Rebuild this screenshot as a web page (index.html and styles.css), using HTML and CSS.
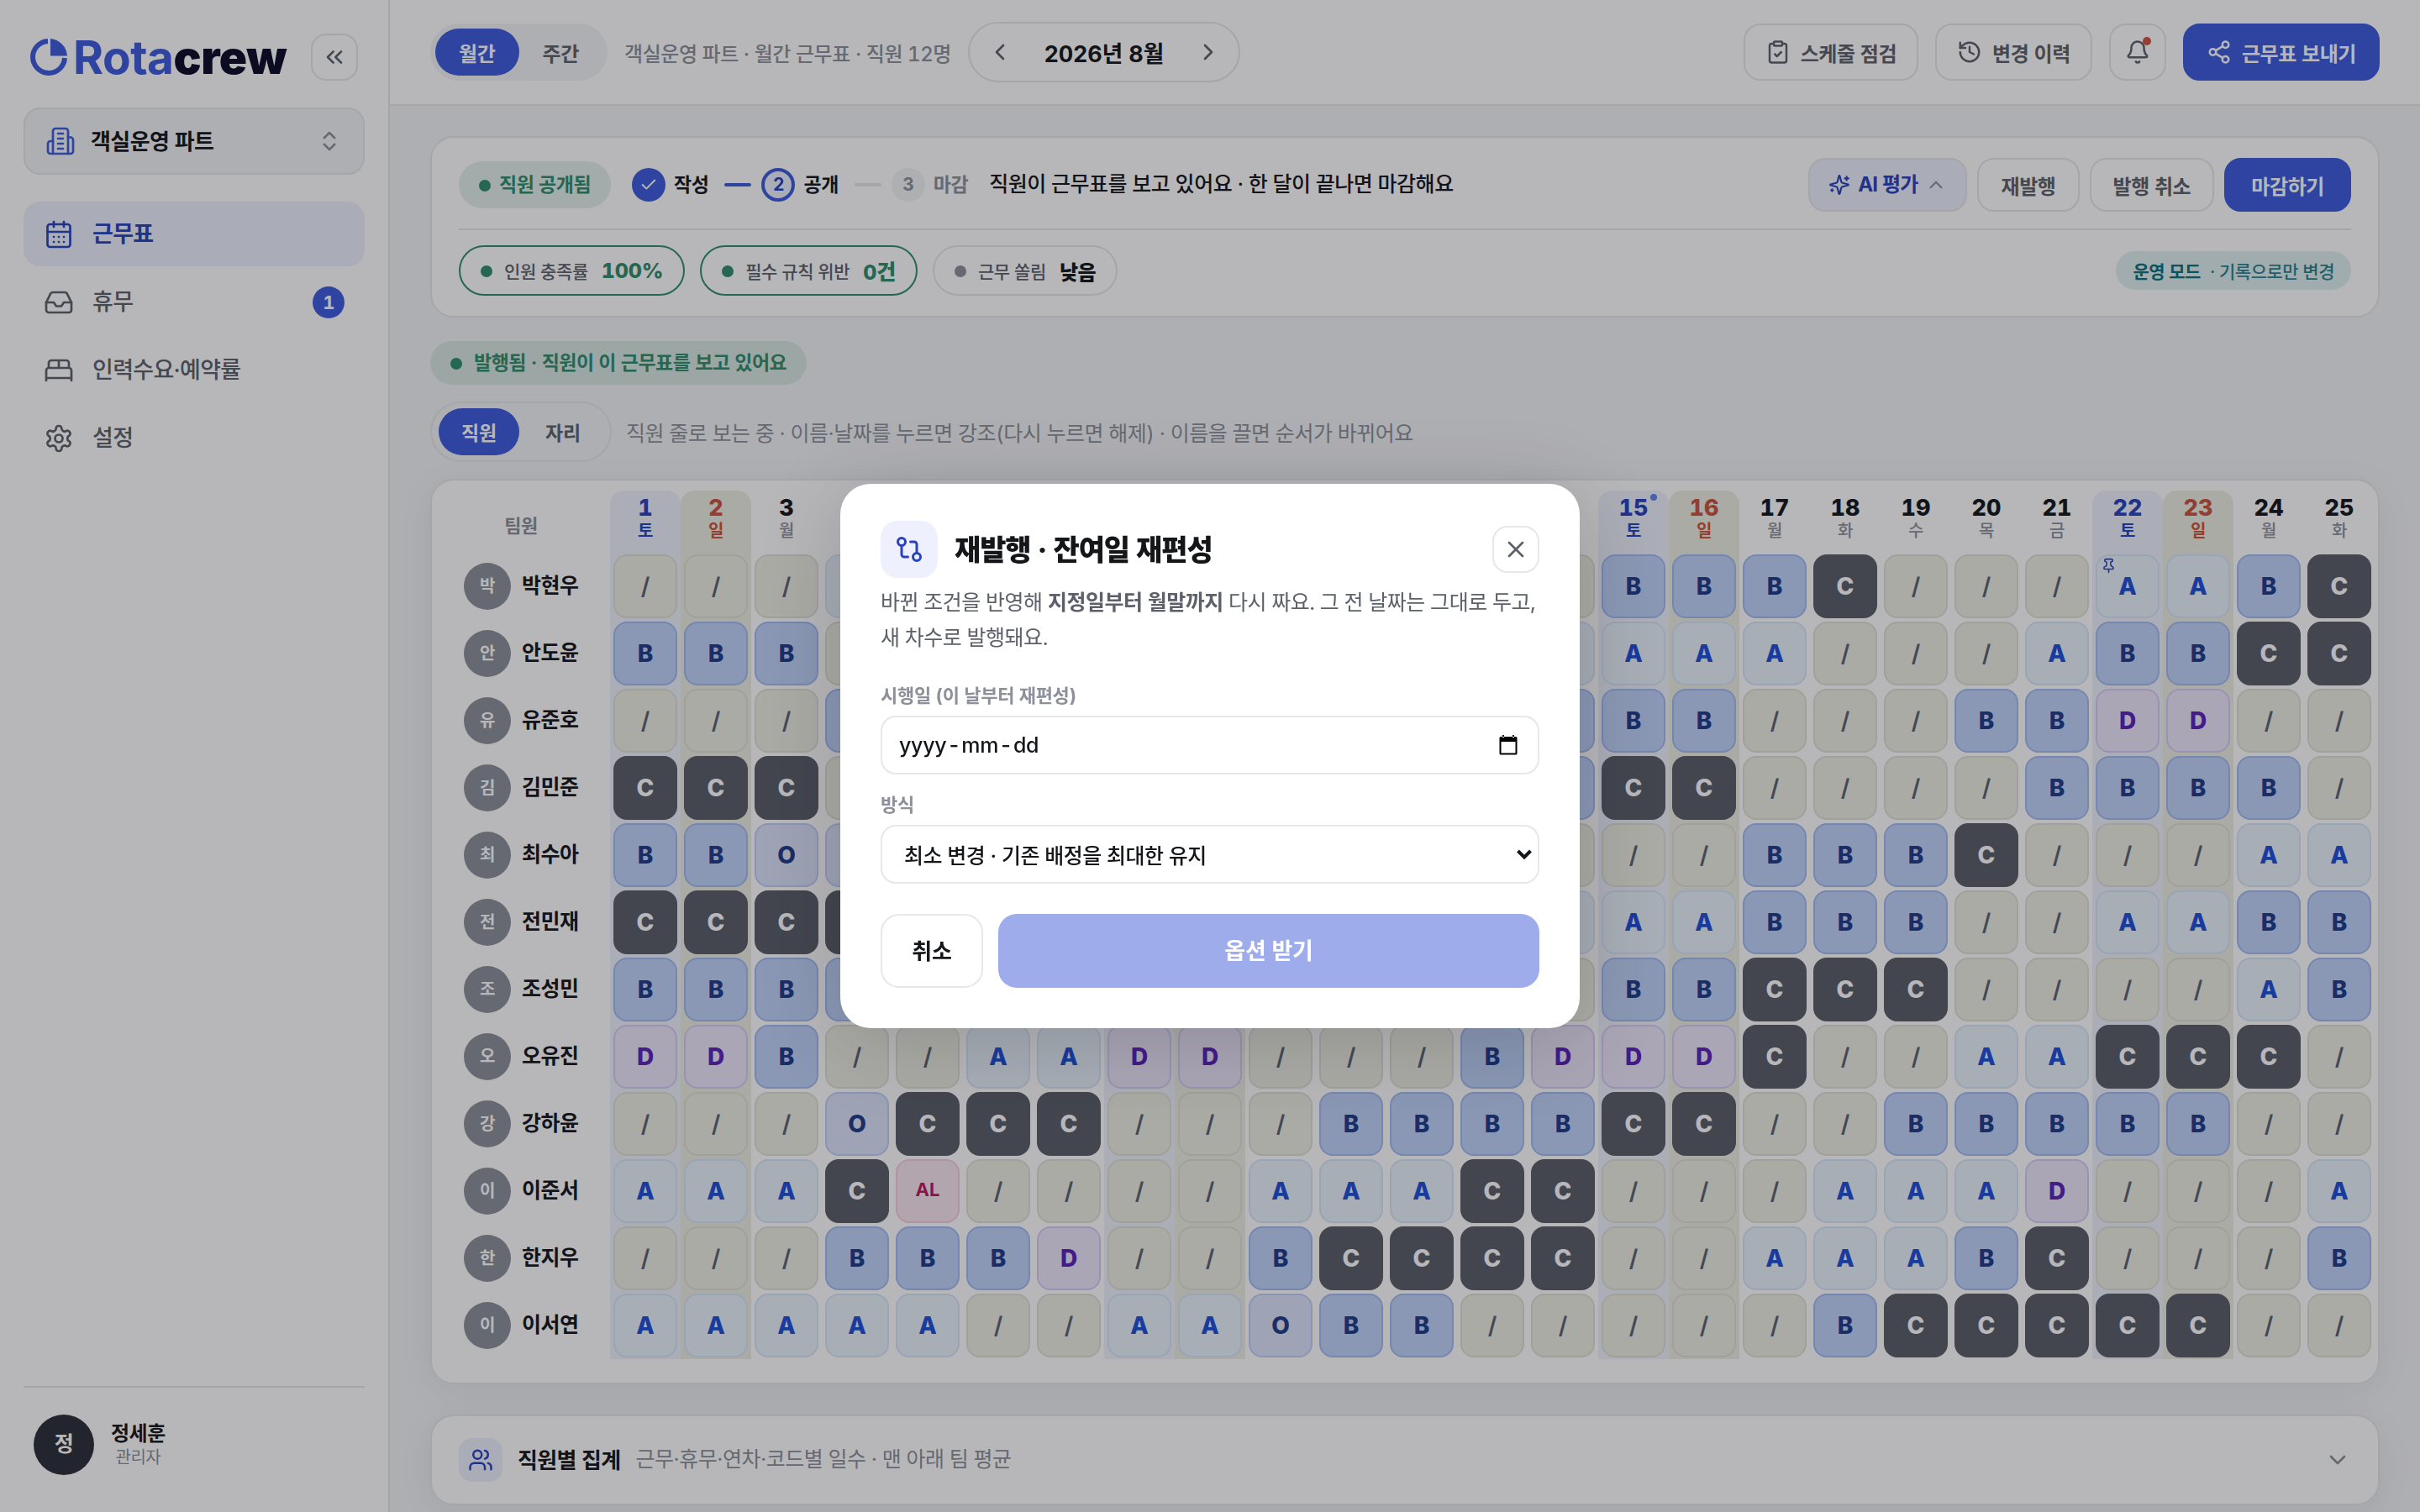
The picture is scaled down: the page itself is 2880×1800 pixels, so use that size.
FILE: index.html
```html
<!DOCTYPE html>
<html lang="ko">
<head>
  <meta charset="UTF-8">
  <meta name="viewport" content="width=device-width, initial-scale=1.0">
  <title>Rotacrew · 근무표</title>
  <link rel="stylesheet" href="styles.css">
</head>
<body>
  <div class="app">
    <!-- 사이드바 -->
    <aside class="sidebar">
      <div class="brand-row">
        <div class="brand">
          <svg class="brand-mark" viewBox="0 0 44 44"><path d="M21 3A19 19 0 1 0 41 23" fill="none" stroke="currentColor" stroke-width="6"/><path d="M24 .1A22 22 0 0 1 44 20.5H24Z" fill="currentColor"/></svg>
          <span class="brand-name">Rota<b>crew</b></span>
        </div>
        <button class="icon-btn collapse"><svg class="icon i32" viewBox="0 0 24 24"><path d="m11 17-5-5 5-5M18 17l-5-5 5-5"/></svg></button>
      </div>
      <button class="part-select">
        <svg class="icon i36 blue" viewBox="0 0 24 24"><path d="M6 22V4a2 2 0 0 1 2-2h8a2 2 0 0 1 2 2v18Z"/><path d="M6 12H4a2 2 0 0 0-2 2v6a2 2 0 0 0 2 2h2M18 9h2a2 2 0 0 1 2 2v9a2 2 0 0 1-2 2h-2M10 6h4M10 10h4M10 14h4M10 18h4"/></svg>
        <span>객실운영 파트</span>
        <svg class="icon i30 push muted" viewBox="0 0 24 24"><path d="m7 15 5 5 5-5M7 9l5-5 5 5"/></svg>
      </button>
      <nav class="nav">
        <a class="nav-item active">
          <svg class="icon i36" viewBox="0 0 24 24"><path d="M8 2v4M16 2v4M3 10h18"/><rect x="3" y="4" width="18" height="18" rx="2"/><path d="M8 14h.01M12 14h.01M16 14h.01M8 18h.01M12 18h.01M16 18h.01"/></svg>
          <span>근무표</span>
        </a>
        <a class="nav-item">
          <svg class="icon i36" viewBox="0 0 24 24"><path d="M22 12h-6l-2 3h-4l-2-3H2"/><path d="M5.45 5.11 2 12v6a2 2 0 0 0 2 2h16a2 2 0 0 0 2-2v-6l-3.45-6.89A2 2 0 0 0 16.76 4H7.24a2 2 0 0 0-1.79 1.11z"/></svg>
          <span>휴무</span>
          <em class="nav-badge">1</em>
        </a>
        <a class="nav-item">
          <svg class="icon i36" viewBox="0 0 24 24"><path d="M2 20v-8a2 2 0 0 1 2-2h16a2 2 0 0 1 2 2v8M4 10V6a2 2 0 0 1 2-2h12a2 2 0 0 1 2 2v4M12 4v6M2 18h20"/></svg>
          <span>인력수요·예약률</span>
        </a>
        <a class="nav-item">
          <svg class="icon i36" viewBox="0 0 24 24"><path d="M12.22 2h-.44a2 2 0 0 0-2 2v.18a2 2 0 0 1-1 1.73l-.43.25a2 2 0 0 1-2 0l-.15-.08a2 2 0 0 0-2.73.73l-.22.38a2 2 0 0 0 .73 2.73l.15.1a2 2 0 0 1 1 1.72v.51a2 2 0 0 1-1 1.74l-.15.09a2 2 0 0 0-.73 2.73l.22.38a2 2 0 0 0 2.73.73l.15-.08a2 2 0 0 1 2 0l.43.25a2 2 0 0 1 1 1.73V20a2 2 0 0 0 2 2h.44a2 2 0 0 0 2-2v-.18a2 2 0 0 1 1-1.73l.43-.25a2 2 0 0 1 2 0l.15.08a2 2 0 0 0 2.73-.73l.22-.39a2 2 0 0 0-.73-2.73l-.15-.08a2 2 0 0 1-1-1.74v-.5a2 2 0 0 1 1-1.74l.15-.09a2 2 0 0 0 .73-2.73l-.22-.38a2 2 0 0 0-2.73-.73l-.15.08a2 2 0 0 1-2 0l-.43-.25a2 2 0 0 1-1-1.73V4a2 2 0 0 0-2-2z"/><circle cx="12" cy="12" r="3"/></svg>
          <span>설정</span>
        </a>
      </nav>
      <div class="account">
        <span class="account-avatar">정</span>
        <span class="account-text"><strong>정세훈</strong><small>관리자</small></span>
      </div>
    </aside>

    <div class="main">
      <!-- 상단 바 -->
      <header class="topbar">
        <div class="segment">
          <button class="on">월간</button>
          <button>주간</button>
        </div>
        <span class="topbar-sub">객실운영 파트 · 월간 근무표 · 직원 12명</span>
        <div class="month-nav">
          <button><svg class="icon i32" viewBox="0 0 24 24"><path d="m15 18-6-6 6-6"/></svg></button>
          <strong>2026년 8월</strong>
          <button><svg class="icon i32" viewBox="0 0 24 24"><path d="m9 18 6-6-6-6"/></svg></button>
        </div>
        <div class="topbar-actions">
          <button class="btn tall">
            <svg class="icon i30" viewBox="0 0 24 24"><rect x="8" y="2" width="8" height="4" rx="1"/><path d="M16 4h2a2 2 0 0 1 2 2v14a2 2 0 0 1-2 2H6a2 2 0 0 1-2-2V6a2 2 0 0 1 2-2h2M9 14l2 2 4-4"/></svg>
            스케줄 점검
          </button>
          <button class="btn tall">
            <svg class="icon i30" viewBox="0 0 24 24"><path d="M3 12a9 9 0 1 0 9-9 9.75 9.75 0 0 0-6.74 2.74L3 8"/><path d="M3 3v5h5M12 7v5l4 2"/></svg>
            변경 이력
          </button>
          <button class="btn tall bell">
            <svg class="icon i30" viewBox="0 0 24 24"><path d="M10.27 21a2 2 0 0 0 3.46 0"/><path d="M3.26 15.33A1 1 0 0 0 4 17h16a1 1 0 0 0 .74-1.67C19.41 13.96 18 12.5 18 8A6 6 0 0 0 6 8c0 4.5-1.41 5.96-2.74 7.33"/></svg>
            <i class="bell-dot"></i>
          </button>
          <button class="btn tall primary">
            <svg class="icon i30" viewBox="0 0 24 24"><circle cx="18" cy="5" r="3"/><circle cx="6" cy="12" r="3"/><circle cx="18" cy="19" r="3"/><path d="m8.59 13.51 6.83 3.98M15.41 6.51l-6.82 3.98"/></svg>
            근무표 보내기
          </button>
        </div>
      </header>

      <div class="content">
        <!-- 발행 상태 -->
        <section class="card status-card">
          <div class="status-row">
            <span class="pub-chip"><i class="dot"></i>직원 공개됨</span>
            <div class="steps">
              <span class="step done"><i><svg class="icon" viewBox="0 0 24 24"><path d="M20 6 9 17l-5-5"/></svg></i>작성</span>
              <span class="bar on"></span>
              <span class="step now"><i>2</i>공개</span>
              <span class="bar"></span>
              <span class="step"><i>3</i>마감</span>
            </div>
            <span class="status-text">직원이 근무표를 보고 있어요 · 한 달이 끝나면 마감해요</span>
            <div class="status-actions">
              <button class="btn ai">
                <svg class="icon i26" viewBox="0 0 24 24"><path d="M9.94 15.5A2 2 0 0 0 8.5 14.06l-6.14-1.58a.5.5 0 0 1 0-.96L8.5 9.94A2 2 0 0 0 9.94 8.5l1.58-6.14a.5.5 0 0 1 .96 0l1.58 6.14a2 2 0 0 0 1.44 1.44l6.14 1.58a.5.5 0 0 1 0 .96l-6.14 1.58a2 2 0 0 0-1.44 1.44l-1.58 6.14a.5.5 0 0 1-.96 0z"/><path d="M20 3v4M22 5h-4M4 17v2M5 18H3"/></svg>
                AI 평가
                <svg class="icon i26 muted" viewBox="0 0 24 24"><path d="m18 15-6-6-6 6"/></svg>
              </button>
              <button class="btn">재발행</button>
              <button class="btn">발행 취소</button>
              <button class="btn primary">마감하기</button>
            </div>
          </div>
          <div class="metric-row">
            <span class="metric ok"><i class="dot"></i>인원 충족률<b>100%</b></span>
            <span class="metric ok"><i class="dot"></i>필수 규칙 위반<b>0건</b></span>
            <span class="metric"><i class="dot"></i>근무 쏠림<b>낮음</b></span>
            <span class="mode-chip"><b>운영 모드</b><span>· 기록으로만 변경</span></span>
          </div>
        </section>

        <div class="banner"><i class="dot"></i>발행됨 · 직원이 이 근무표를 보고 있어요</div>

        <div class="view-row">
          <div class="view-toggle">
            <button class="on">직원</button>
            <button>자리</button>
          </div>
          <span class="view-hint">직원 줄로 보는 중 · 이름·날짜를 누르면 강조(다시 누르면 해제) · 이름을 끌면 순서가 바뀌어요</span>
        </div>

        <!-- 근무표: 행은 스크립트에서 생성 -->
        <section class="card roster-card">
          <table class="roster">
            <thead><tr id="roster-head"></tr></thead>
            <tbody id="roster-body"></tbody>
          </table>
        </section>

        <section class="card summary-card">
          <span class="summary-icon"><svg class="icon i30" viewBox="0 0 24 24"><path d="M16 21v-2a4 4 0 0 0-4-4H6a4 4 0 0 0-4 4v2"/><circle cx="9" cy="7" r="4"/><path d="M22 21v-2a4 4 0 0 0-3-3.87M16 3.13a4 4 0 0 1 0 7.75"/></svg></span>
          <strong>직원별 집계</strong>
          <span class="summary-sub">근무·휴무·연차·코드별 일수 · 맨 아래 팀 평균</span>
          <svg class="icon i32 push muted" viewBox="0 0 24 24"><path d="m6 9 6 6 6-6"/></svg>
        </section>
      </div>
    </div>
  </div>

  <!-- 재발행 모달 -->
  <div class="overlay">
    <div class="modal">
      <div class="modal-head">
        <span class="modal-icon"><svg class="icon i36" viewBox="0 0 24 24"><circle cx="18" cy="18" r="3"/><circle cx="6" cy="6" r="3"/><path d="M13 6h3a2 2 0 0 1 2 2v7M11 18H8a2 2 0 0 1-2-2V9"/></svg></span>
        <h2>재발행 · 잔여일 재편성</h2>
        <button class="icon-btn push"><svg class="icon i32" viewBox="0 0 24 24"><path d="M18 6 6 18M6 6l12 12"/></svg></button>
      </div>
      <p class="modal-desc">바뀐 조건을 반영해 <b>지정일부터 월말까지</b> 다시 짜요. 그 전 날짜는 그대로 두고, 새 차수로 발행돼요.</p>
      <label class="field-label">시행일 (이 날부터 재편성)</label>
      <div class="field date-field">
        <span>yyyy</span><span class="sep">-</span><span>mm</span><span class="sep">-</span><span>dd</span>
        <svg class="date-icon push" viewBox="0 0 22 24"><path d="M4 0h2v3H4zM16 0h2v3h-2zM2 2h18a1.500 1.500 0 0 1 1.500 1.500V22a1.500 1.500 0 0 1-1.500 1.500H2A1.500 1.500 0 0 1 .5 22V3.500A1.500 1.500 0 0 1 2 2zM2.500 8v13.500h17V8z" fill="currentColor" fill-rule="evenodd"/></svg>
      </div>
      <label class="field-label">방식</label>
      <div class="field select-field">
        <span>최소 변경 · 기존 배정을 최대한 유지</span>
        <svg class="select-arrow push" viewBox="0 0 20 14"><path d="m2.500 3 7.500 7.500L17.500 3" fill="none" stroke="currentColor" stroke-width="4"/></svg>
      </div>
      <div class="modal-actions">
        <button class="cancel">취소</button>
        <button class="submit" disabled>옵션 받기</button>
      </div>
    </div>
  </div>

  <script>
    const week = ['토', '일', '월', '화', '수', '목', '금'];
    const crew = [
      ['박현우', '/ / / A A B B / / A A C C / B B B C / / / A A B C'],
      ['안도윤', 'B B B / / C C C / / B B / A A A A / / / A B B C C'],
      ['유준호', '/ / / B B B / / A A A / / B B B / / / B B D D / /'],
      ['김민준', 'C C C / / / A A B B / / B B C C / / / / B B B B /'],
      ['최수아', 'B B O O / / B B C C C / / / / / B B B C / / / A A'],
      ['전민재', 'C C C C / / / B B B / / A A A A B B B / / A A B B'],
      ['조성민', 'B B B B / / C C C / / A A / B B C C C / / / / A B'],
      ['오유진', 'D D B / / A A D D / / / B D D D C / / A A C C C /'],
      ['강하윤', '/ / / O C C C / / / B B B B C C / / B B B B B / /'],
      ['이준서', 'A A A C AL / / / / A A A C C / / / A A A D / / / A'],
      ['한지우', '/ / / B B B D / / B C C C C / / A A A B C / / / B'],
      ['이서연', 'A A A A A / / A A O B B / / / / / B C C C C C / /']
    ];
    const pin = '<svg class="icon pin" viewBox="0 0 24 24"><path d="M12 17v5M9 10.76a2 2 0 0 1-1.110 1.790l-1.780.9A2 2 0 0 0 5 15.240V16a1 1 0 0 0 1 1h12a1 1 0 0 0 1-1v-.76a2 2 0 0 0-1.110-1.790l-1.780-.9A2 2 0 0 1 15 10.760V7a1 1 0 0 1 1-1 2 2 0 0 0 0-4H8a2 2 0 0 0 0 4 1 1 0 0 1 1 1z"/></svg>';

    // 1일이 토요일
    function dayClass(i) {
      return i % 7 === 0 ? 'sat' : i % 7 === 1 ? 'sun' : '';
    }

    let head = '<th class="who">팀원</th>';
    for (let i = 0; i < 25; i++) {
      head += `<th class="${dayClass(i)}"><b>${i + 1}</b><small>${week[i % 7]}</small>${i === 14 ? '<i class="holiday"></i>' : ''}</th>`;
    }
    document.getElementById('roster-head').innerHTML = head;

    document.getElementById('roster-body').innerHTML = crew.map(([name, codes], row) => {
      const cells = codes.split(' ').map((code, i) => {
        const cls = code === '/' ? 'off' : code.toLowerCase();
        return `<td class="${dayClass(i)}"><span class="cell ${cls}">${code}${row === 0 && i === 21 ? pin : ''}</span></td>`;
      }).join('');
      return `<tr><td class="who"><div><i>${name[0]}</i>${name}</div></td>${cells}</tr>`;
    }).join('');
  </script>
</body>
</html>
```
FILE: styles.css
```css
:root {
  --brand: #3b5bdb;
  --brand-deep: #2843bd;
  --soft: #edf0fd;
  --ink: #14161a;
  --ink2: #5c606a;
  --muted: #8b909a;
  --line: #e6e7ea;
  --page: #f3f4f6;
  --green: #2f8d6a;
}
* { box-sizing: border-box; }
body {
  margin: 0;
  font-family: Inter, "Noto Sans CJK KR", sans-serif;
  font-size: 26px;
  line-height: 1.5;
  letter-spacing: -0.48px;
  font-variant-numeric: tabular-nums;
  color: var(--ink);
  background: var(--page);
  height: 1800px;
  overflow: hidden;
}
button {
  font: inherit;
  line-height: normal;
  letter-spacing: -0.26px;
  color: inherit;
  background: none;
  border: none;
  padding: 0;
  white-space: nowrap;
}
i, em { font-style: normal; }
.icon {
  fill: none;
  stroke: currentColor;
  stroke-width: 2;
  stroke-linecap: round;
  stroke-linejoin: round;
  flex: none;
  display: block;
}
.i26 { width: 26px; height: 26px; }
.i30 { width: 30px; height: 30px; }
.i32 { width: 32px; height: 32px; }
.i36 { width: 36px; height: 36px; stroke-width: 1.8; }
.push { margin-left: auto; }
.blue { color: var(--brand); }
.muted { color: var(--muted); }
.dot {
  width: 14px;
  height: 14px;
  border-radius: 50%;
  background: currentColor;
  flex: none;
  position: relative;
  top: 1px;
}
.app { display: flex; height: 1800px; }

/* sidebar */
.sidebar {
  width: 464px;
  flex: none;
  background: #fff;
  border-right: 2px solid var(--line);
  padding: 40px 28px 44px;
  display: flex;
  flex-direction: column;
}
.brand-row {
  display: flex;
  align-items: center;
  justify-content: space-between;
  padding: 0 8px;
  height: 56px;
}
.brand { display: flex; align-items: center; gap: 7px; color: var(--brand); }
.brand-mark { width: 44px; height: 44px; }
.brand-name { font-size: 55px; line-height: 56px; font-weight: 700; letter-spacing: -0.5px; }
.brand-name b { color: #0a0a28; }
.icon-btn {
  width: 56px;
  height: 56px;
  border: 2px solid var(--line);
  border-radius: 18px;
  display: flex;
  align-items: center;
  justify-content: center;
  color: var(--ink2);
}
.part-select {
  margin-top: 32px;
  height: 80px;
  flex: none;
  border: 2px solid var(--line);
  border-radius: 20px;
  background: var(--page);
  padding: 0 25px 0 24px;
  display: flex;
  align-items: center;
  gap: 18px;
  font-weight: 700;
  line-height: 1.5;
  letter-spacing: -0.6px;
}
.nav { margin-top: 32px; display: flex; flex-direction: column; gap: 4px; }
.nav-item {
  height: 77px;
  padding: 0 24px;
  border-radius: 20px;
  display: flex;
  align-items: center;
  gap: 22px;
  font-size: 27px;
  font-weight: 500;
  letter-spacing: -0.7px;
  color: var(--ink2);
}
.nav-item > span { padding-top: 2px; }
.nav-item.active { background: var(--soft); color: var(--brand-deep); font-weight: 700; }
.nav-badge {
  margin-left: auto;
  width: 38px;
  height: 38px;
  border-radius: 50%;
  background: var(--brand);
  color: #fff;
  font-size: 22px;
  line-height: 38px;
  font-weight: 700;
  text-align: center;
}
.account {
  margin-top: auto;
  border-top: 2px solid var(--line);
  padding: 32px 12px 0;
  display: flex;
  align-items: center;
  gap: 20px;
}
.account-avatar {
  width: 72px;
  height: 72px;
  border-radius: 50%;
  background: #2a2f39;
  color: #fff;
  font-size: 25px;
  font-weight: 700;
  display: flex;
  align-items: center;
  justify-content: center;
}
.account-text { display: flex; flex-direction: column; align-items: center; }
.account-text strong { font-size: 24px; line-height: 30px; font-weight: 700; }
.account-text small { font-size: 20px; line-height: 26px; color: var(--muted); }

/* topbar */
.main { flex: 1; min-width: 0; }
.topbar {
  height: 126px;
  background: #fff;
  border-bottom: 2px solid var(--line);
  padding: 0 48px;
  display: flex;
  align-items: center;
  gap: 20px;
}
.segment {
  display: flex;
  padding: 6px;
  border-radius: 34px;
  background: var(--page);
  font-size: 24px;
  font-weight: 700;
  color: var(--ink2);
}
.segment button { width: 99.5px; height: 56px; border-radius: 28px; }
.segment .on, .view-toggle .on { background: var(--brand); color: #fff; }
.topbar-sub { font-size: 24px; line-height: normal; font-weight: 500; letter-spacing: -0.44px; color: var(--muted); white-space: nowrap; }
.month-nav {
  height: 72px;
  width: 324px;
  border: 2px solid var(--line);
  border-radius: 36px;
  padding: 0 8px;
  display: flex;
  align-items: center;
  justify-content: space-between;
  font-size: 27px;
  line-height: normal;
  letter-spacing: -0.2px;
}
.month-nav button { width: 56px; height: 56px; display: flex; align-items: center; justify-content: center; color: var(--ink2); }
.topbar-actions { margin-left: auto; display: flex; gap: 20px; }
.btn {
  height: 64px;
  padding: 0 26px;
  border: 2px solid var(--line);
  border-radius: 20px;
  font-size: 24px;
  font-weight: 700;
  color: var(--ink2);
  display: flex;
  align-items: center;
  justify-content: center;
  gap: 12px;
}
.btn.tall { height: 68px; padding: 0 24px; letter-spacing: -0.4px; }
.btn.primary { background: var(--brand); border-color: var(--brand); color: #fff; padding: 0 30px; }
.btn.tall.primary { padding: 0 26px; }
.btn.bell { width: 68px; padding: 0; position: relative; }
.bell-dot {
  position: absolute;
  top: 14px;
  right: 16px;
  width: 10px;
  height: 10px;
  border-radius: 50%;
  background: #d0533f;
}

/* content */
.content { padding: 36px 48px 0; }
.card { background: #fff; border: 2px solid var(--line); border-radius: 28px; }
.status-card { padding: 24px 32px; }
.status-row { display: flex; align-items: center; height: 64px; }
.pub-chip {
  height: 56px;
  padding: 0 24px;
  border-radius: 28px;
  background: #e2efea;
  color: var(--green);
  font-size: 23px;
  font-weight: 700;
  display: flex;
  align-items: center;
  gap: 10px;
}
.steps { display: flex; align-items: center; margin-left: 25px; font-size: 23px; font-weight: 700; }
.step { display: flex; align-items: center; gap: 10px; color: var(--muted); }
.step i {
  width: 40px;
  height: 40px;
  border-radius: 50%;
  background: var(--page);
  display: flex;
  align-items: center;
  justify-content: center;
  font-size: 21px;
}
.step .icon { width: 22px; height: 22px; }
.step.done, .step.now { color: var(--ink); }
.step.done i { background: var(--brand); color: #fff; }
.step.now i { background: var(--soft); border: 4px solid var(--brand); color: var(--brand-deep); }
.bar { width: 32px; height: 4px; border-radius: 2px; background: var(--line); margin: 0 12px 0 19px; }
.bar.on { background: var(--brand); }
.status-text { margin-left: 25px; font-size: 25px; font-weight: 500; }
.status-actions { margin-left: auto; display: flex; gap: 12px; }
.status-actions .btn { letter-spacing: -0.4px; }
.status-actions .btn.ai { background: var(--soft); color: var(--brand-deep); padding: 0 22px; gap: 9px; line-height: 1.5; letter-spacing: -0.8px; }
.metric-row {
  margin-top: 20px;
  border-top: 2px solid var(--line);
  padding-top: 18px;
  display: flex;
  align-items: center;
  gap: 18px;
}
.metric {
  height: 60px;
  padding: 0 24px;
  border: 2px solid var(--line);
  border-radius: 30px;
  display: flex;
  align-items: center;
  font-size: 21px;
  line-height: normal;
  font-weight: 500;
  letter-spacing: -0.4px;
  color: var(--ink2);
}
.metric .dot { margin-right: 14px; color: var(--muted); }
.metric b { margin-left: 16px; font-size: 25px; color: var(--ink); font-weight: 800; letter-spacing: -0.2px; }
.metric:not(.ok) b { font-size: 24px; letter-spacing: -0.5px; }
.metric.ok { border-color: var(--green); }
.metric.ok .dot, .metric.ok b { color: var(--green); }
.mode-chip {
  margin-left: auto;
  height: 46px;
  padding: 0 20px;
  border-radius: 23px;
  background: #e0eff0;
  color: #0b707c;
  font-size: 21px;
  line-height: normal;
  display: flex;
  align-items: center;
  gap: 11px;
}
.mode-chip span { opacity: .85; font-weight: 500; }
.banner {
  margin-top: 28px;
  height: 52px;
  width: fit-content;
  padding: 0 24px;
  border-radius: 26px;
  background: #d8e7e2;
  color: var(--green);
  font-size: 23px;
  font-weight: 700;
  display: flex;
  align-items: center;
  gap: 14px;
}
.view-row { margin-top: 20px; display: flex; align-items: center; gap: 17px; }
.view-toggle {
  height: 72px;
  border: 2px solid var(--line);
  border-radius: 36px;
  padding: 6px 8px;
  display: flex;
  gap: 4px;
  font-size: 23px;
  font-weight: 700;
  color: var(--ink2);
}
.view-toggle button { width: 96px; height: 56px; border-radius: 28px; }
.view-hint { font-size: 25px; line-height: normal; color: var(--muted); }

/* roster */
.roster-card {
  margin-top: 20px;
  height: 1078px;
  padding-top: 12px;
  overflow: hidden;
  box-shadow: 0 8px 40px rgba(20, 24, 40, .07);
}
.roster { border-collapse: collapse; table-layout: fixed; width: 2312px; }
.roster th, .roster td { width: 84px; padding: 0; text-align: center; }
.roster .who { width: 212px; }
.roster th {
  height: 74px;
  vertical-align: top;
  padding-top: 7px;
  border-radius: 16px 16px 0 0;
  position: relative;
}
.roster th.who { vertical-align: middle; padding: 10px 0 0; font-size: 22px; font-weight: 600; color: var(--muted); }
.roster th b { display: block; font-size: 27px; line-height: 28px; font-weight: 800; letter-spacing: 0; }
.roster th small { display: block; font-size: 20px; line-height: 26px; font-weight: 500; color: var(--muted); }
.roster .sat { background: #eef2fb; }
.roster .sun { background: #eeeee4; }
.roster th.sat, .roster th.sat small { color: var(--brand-deep); font-weight: 600; }
.roster th.sun, .roster th.sun small { color: #cb523f; font-weight: 600; }
.holiday {
  position: absolute;
  top: 4px;
  right: 14px;
  width: 8px;
  height: 8px;
  border-radius: 50%;
  background: #6480ea;
}
.roster td { height: 80px; }
.roster td.who div {
  display: flex;
  align-items: center;
  gap: 13px;
  padding-left: 38px;
  font-size: 25px;
  font-weight: 700;
}
.roster td.who i {
  width: 56px;
  height: 56px;
  border-radius: 50%;
  background: var(--muted);
  color: #fff;
  font-size: 20px;
  line-height: 56px;
}
.cell {
  width: 76px;
  height: 76px;
  margin: 0 auto;
  border: 2px solid;
  border-radius: 16px;
  display: block;
  line-height: 72px;
  font-size: 28px;
  font-weight: 800;
  letter-spacing: 0;
  position: relative;
}
.cell.off { background: #eeeee4; border-color: #e0ded4; color: #5a6170; font-weight: 600; }
.cell.a { background: #e9f2fb; border-color: #d5e4fa; color: #1d4ed8; }
.cell.b { background: #bfd3fa; border-color: #a2bbf1; color: #1e3a8a; }
.cell.c { background: #595e68; border-color: #595e68; color: #fff; }
.cell.d { background: #ede7fb; border-color: #d7cbf5; color: #5b21b6; }
.cell.o { background: #dbe3fa; border-color: #c0cdf7; color: #1e3a8a; }
.cell.al { background: #fae6ef; border-color: #f6cbdc; color: #be185d; font-size: 22px; line-height: 68px; font-weight: 700; }
.pin { position: absolute; left: 4px; top: 2px; width: 19px; height: 19px; color: var(--brand-deep); }

.summary-card {
  margin-top: 36px;
  height: 108px;
  padding: 0 32px;
  display: flex;
  align-items: center;
  box-shadow: 0 8px 40px rgba(20, 24, 40, .07);
}
.summary-icon {
  width: 52px;
  height: 52px;
  border-radius: 16px;
  background: var(--soft);
  color: var(--brand-deep);
  display: flex;
  align-items: center;
  justify-content: center;
}
.summary-card strong { margin-left: 18px; font-size: 26px; letter-spacing: -0.7px; }
.summary-sub { margin-left: 18px; font-size: 25px; color: var(--muted); }

/* modal */
.overlay {
  position: fixed;
  inset: 0;
  background: rgba(15, 17, 23, .3);
  display: flex;
  align-items: center;
  justify-content: center;
}
.modal {
  width: 880px;
  height: 648px;
  background: #fff;
  border-radius: 36px;
  padding: 44px 48px 48px;
  box-shadow: 0 16px 96px rgba(15, 17, 23, .18);
}
.modal-head { display: flex; align-items: center; height: 68px; }
.modal-icon {
  width: 68px;
  height: 68px;
  border-radius: 20px;
  background: #eef0fe;
  color: var(--brand-deep);
  display: flex;
  align-items: center;
  justify-content: center;
}
.modal-icon .icon { stroke-width: 2; }
.modal-head h2 { margin: 0 0 0 20px; font-size: 34px; font-weight: 800; letter-spacing: -1.1px; }
.modal-desc { margin: 8px 0 0; font-size: 25px; line-height: 42px; color: var(--ink2); word-break: keep-all; }
.field-label { display: block; font-size: 22px; line-height: 32px; font-weight: 700; color: var(--muted); margin-top: 32px; letter-spacing: -0.3px; }
.field {
  height: 70px;
  margin-top: 8px;
  border: 2px solid #e6e7eb;
  border-radius: 18px;
  padding: 0 24px 0 20px;
  display: flex;
  align-items: center;
  font-size: 25px;
  line-height: normal;
  font-weight: 500;
}
.field + .field-label { margin-top: 20px; }
.date-field { letter-spacing: -0.3px; }
.date-field .sep { margin: 0 1px; }
.date-icon { width: 22px; height: 24px; color: #000; }
.select-field { padding: 0 6px 0 26px; }
.select-arrow { width: 20px; height: 14px; }
.modal-actions { margin-top: 36px; display: flex; gap: 18px; height: 88px; }
.modal-actions button { line-height: 1.5; }
.cancel { width: 122px; border: 2px solid #e6e7eb; border-radius: 22px; font-size: 26px; font-weight: 700; }
.submit { flex: 1; border-radius: 22px; background: #9eaceb; color: #fff; font-size: 27px; font-weight: 700; padding-top: 2px; }
```
